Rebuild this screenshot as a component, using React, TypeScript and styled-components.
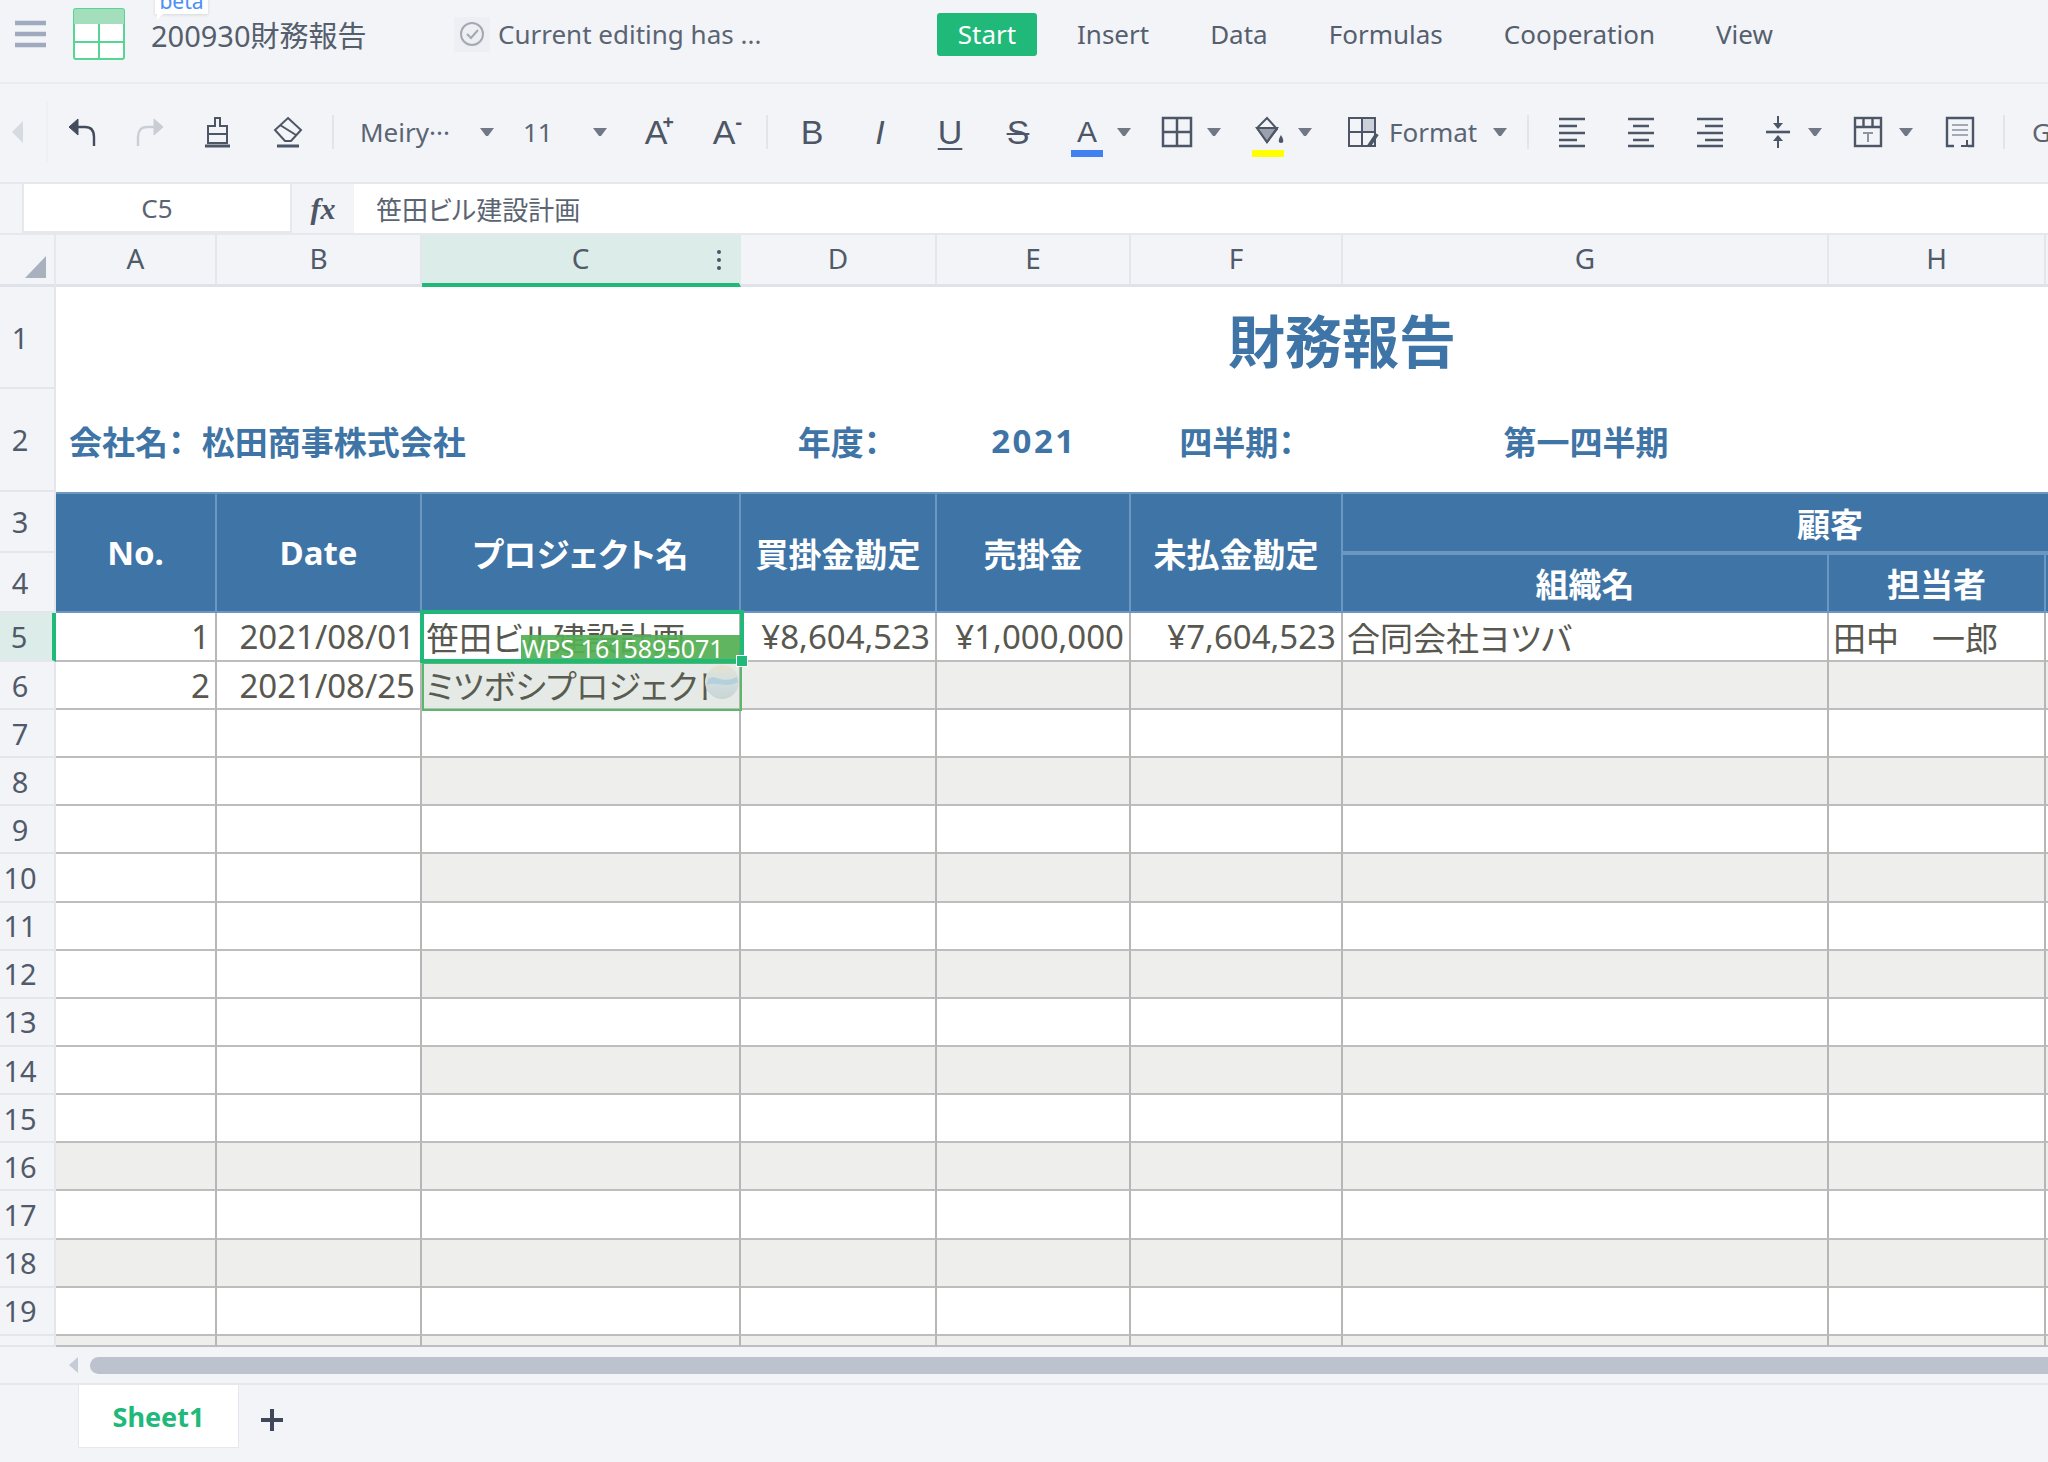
import React from "react";
import styled, { createGlobalStyle } from "styled-components";

const GREEN = "#20b97a";
const BLUE = "#3f74a6";
const ICON = "#4d5666";
const PAGE = "#f2f4f8";
const UI_FONT = `"Noto Sans", "Noto Sans CJK JP", sans-serif`;
const CJK_FONT = `"Noto Sans", "Noto Sans CJK JP", sans-serif`;

const Global = createGlobalStyle`
  html, body { margin: 0; padding: 0; width: 2048px; height: 1462px; overflow: hidden; background: ${PAGE}; }
  body { font-family: ${UI_FONT}; font-feature-settings: "palt"; }
  * { box-sizing: border-box; }
`;

const Page = styled.div`
  width: 2048px;
  height: 1462px;
  display: flex;
  flex-direction: column;
  overflow: hidden;
  position: relative;
`;

/* ---------- title bar ---------- */
const TitleBar = styled.header`
  height: 84px;
  flex: none;
  display: flex;
  align-items: center;
  padding: 0 0 14px 15px;
  border-bottom: 2px solid #e9ebf0;
  position: relative;
`;
const BetaTag = styled.div`
  position: absolute;
  left: 155px;
  top: -8px;
  width: 53px;
  height: 22px;
  background: #fff;
  color: #4a90f5;
  font-size: 21px;
  line-height: 18px;
  text-align: center;
  box-shadow: 0 1px 3px rgba(0, 0, 0, 0.12);
  &::after {
    content: "";
    position: absolute;
    left: 2px;
    bottom: -6px;
    border-left: 6px solid #fff;
    border-bottom: 6px solid transparent;
  }
`;
const DocTitle = styled.div`
  margin-left: 26px;
  width: 226px;
  font-size: 29px;
  color: #555e6c;
  white-space: nowrap;
`;
const StatusBox = styled.div`
  margin-left: 77px;
  width: 36px;
  height: 35px;
  background: #edeff2;
  display: flex;
  align-items: center;
  justify-content: center;
`;
const StatusText = styled.div`
  margin-left: 8px;
  width: 265px;
  font-size: 26px;
  color: #5b6472;
  white-space: nowrap;
`;
const MenuNav = styled.nav`
  margin-left: 174px;
  display: flex;
  align-items: center;
  gap: 61px;
`;
const MenuTab = styled.div<{ $active?: boolean }>`
  height: 43px;
  display: flex;
  align-items: center;
  justify-content: center;
  font-size: 26px;
  white-space: nowrap;
  color: ${(p) => (p.$active ? "#fff" : "#565f6e")};
  ${(p) => p.$active && `width: 100px; margin-right: -21px; background: ${GREEN}; border-radius: 3px;`}
`;

/* ---------- toolbar ---------- */
const ToolBar = styled.div`
  height: 100px;
  flex: none;
  display: flex;
  align-items: center;
  border-bottom: 2px solid #e6e8ee;
  overflow: hidden;
  padding-bottom: 2px;
`;
const NavEdge = styled.div`
  width: 48px;
  height: 60px;
  flex: none;
  display: flex;
  align-items: center;
  padding-left: 12px;
  border-right: 2px solid #eef0f4;
  &::before {
    content: "";
    border-right: 11px solid #d6dae1;
    border-top: 11px solid transparent;
    border-bottom: 11px solid transparent;
  }
`;
const Tool = styled.div<{ $ml: number; $w?: number }>`
  flex: none;
  margin-left: ${(p) => p.$ml}px;
  width: ${(p) => p.$w ?? 32}px;
  height: 38px;
  position: relative;
  display: flex;
  align-items: center;
  justify-content: center;
  color: ${ICON};
`;
const Divider = styled.div<{ $ml: number }>`
  flex: none;
  margin-left: ${(p) => p.$ml}px;
  width: 2px;
  height: 34px;
  background: #e2e4ea;
`;
const Caret = styled.div<{ $ml: number }>`
  flex: none;
  margin-left: ${(p) => p.$ml}px;
  width: 14px;
  height: 8px;
  border-left: 6px solid transparent;
  border-right: 6px solid transparent;
  border-top: 8px solid #717885;
`;
const ToolLabel = styled.div<{ $ml: number; $w: number }>`
  flex: none;
  margin-left: ${(p) => p.$ml}px;
  width: ${(p) => p.$w}px;
  font-size: 26px;
  color: #5b6472;
  white-space: nowrap;
  overflow: hidden;
`;
const Glyph = styled.span<{ $italic?: boolean; $line?: "under" | "strike"; $weight?: number }>`
  font-family: "Liberation Sans", "Noto Sans", sans-serif;
  font-size: 34px;
  line-height: 38px;
  font-weight: ${(p) => p.$weight ?? 400};
  font-style: ${(p) => (p.$italic ? "italic" : "normal")};
  text-decoration: ${(p) => (p.$line === "under" ? "underline" : p.$line === "strike" ? "line-through" : "none")};
  text-decoration-thickness: 2px;
  text-underline-offset: 4px;
`;
const SizeMark = styled.span`
  position: absolute;
  right: -2px;
  top: -1px;
  font-size: 20px;
  line-height: 20px;
  font-weight: 700;
`;
const ColorBar = styled.div<{ $color: string }>`
  position: absolute;
  left: 0;
  right: 0;
  bottom: -6px;
  height: 7px;
  background: ${(p) => p.$color};
`;

/* ---------- formula bar ---------- */
const FormulaBar = styled.div`
  height: 51px;
  flex: none;
  display: flex;
  align-items: stretch;
  padding-left: 22px;
  border-bottom: 2px solid #e6e8ee;
`;
const NameBox = styled.div`
  width: 270px;
  background: #fff;
  border: 2px solid #e6e8ee;
  border-top-width: 0;
  display: flex;
  align-items: center;
  justify-content: center;
  font-size: 26px;
  color: #5b6472;
`;
const FxMark = styled.div`
  width: 62px;
  display: flex;
  align-items: center;
  justify-content: center;
  font-family: "Liberation Serif", serif;
  font-style: italic;
  font-weight: 700;
  font-size: 30px;
  color: #4d5666;
`;
const FormulaInput = styled.div`
  flex: 1;
  background: #fff;
  padding-left: 22px;
  display: flex;
  align-items: center;
  font-size: 26px;
  color: #5b6472;
`;

/* ---------- sheet ---------- */
const Sheet = styled.div`
  position: relative;
  flex: none;
  height: 1112px;
  overflow: hidden;
  display: grid;
  grid-template-columns: 56px 161px 205px 319px 196px 194px 212px 486px 217px 273px 309px;
  grid-template-rows: 52px 102px 103px 61px 60px 49px 48px repeat(13, 48.15px) 11px;
`;
const Corner = styled.div`
  grid-column: 1;
  grid-row: 1;
  border-bottom: 3px solid #dfe2e8;
  border-right: 2px solid #e6e8ee;
  position: relative;
  &::after {
    content: "";
    position: absolute;
    right: 8px;
    bottom: 6px;
    border-left: 21px solid transparent;
    border-bottom: 22px solid #a9b1bf;
  }
`;
const ColHead = styled.div<{ $col: number; $active?: boolean }>`
  grid-column: ${(p) => p.$col};
  grid-row: 1;
  position: relative;
  display: flex;
  align-items: center;
  justify-content: center;
  padding-bottom: 3px;
  font-size: 28px;
  color: #515a69;
  background: ${(p) => (p.$active ? "#dcece9" : PAGE)};
  border-right: 2px solid ${(p) => (p.$active ? "#dcece9" : "#e4e6ec")};
  border-bottom: ${(p) => (p.$active ? `4px solid ${GREEN}` : "3px solid #dfe2e8")};
`;
const ColMenu = styled.div`
  position: absolute;
  right: 18px;
  top: 15px;
  display: flex;
  flex-direction: column;
  gap: 4px;
  span {
    width: 4px;
    height: 4px;
    border-radius: 50%;
    background: #4d5666;
  }
`;
const RowHead = styled.div<{ $row: number; $active?: boolean }>`
  grid-column: 1;
  grid-row: ${(p) => p.$row};
  display: flex;
  align-items: center;
  justify-content: center;
  padding-right: 14px;
  font-size: 29px;
  color: #515a69;
  background: ${(p) => (p.$active ? "#dcece9" : PAGE)};
  border-right: ${(p) => (p.$active ? `4px solid ${GREEN}` : "2px solid #e4e6ec")};
  border-bottom: 2px solid #e4e6ec;
`;
const TitleCell = styled.div`
  grid-column: 2 / -1;
  grid-row: 2;
  background: #fff;
  display: flex;
  align-items: center;
  justify-content: center;
  font-size: 57px;
  font-weight: 700;
  color: ${BLUE};
  font-family: "Noto Sans CJK JP", sans-serif;
`;
const InfoCell = styled.div<{ $col: string; $center?: boolean }>`
  grid-column: ${(p) => p.$col};
  grid-row: 3;
  background: #fff;
  display: flex;
  align-items: center;
  justify-content: ${(p) => (p.$center ? "center" : "flex-start")};
  padding-left: ${(p) => (p.$center ? 0 : 13)}px;
  font-size: 33px;
  font-weight: 700;
  color: ${BLUE};
  white-space: pre;
`;
const WideNumber = styled.span`
  letter-spacing: 2.5px;
`;
const HeadCell = styled.div<{ $col: string; $row: string }>`
  grid-column: ${(p) => p.$col};
  grid-row: ${(p) => p.$row};
  background: ${BLUE};
  display: flex;
  align-items: center;
  justify-content: center;
  font-size: 33px;
  font-weight: 700;
  color: #fff;
  white-space: nowrap;
  border-right: 2px solid #6c97c0;
  border-bottom: 2px solid #6c97c0;
  border-top: 2px solid #6c97c0;
`;
const Cell = styled.div<{ $col: number; $row: number; $shaded: boolean; $right: boolean }>`
  grid-column: ${(p) => p.$col};
  grid-row: ${(p) => p.$row};
  background: ${(p) => (p.$shaded ? "#eeeeec" : "#fff")};
  border-right: 2px solid #b6b6b6;
  border-bottom: 2px solid #bdbdbd;
  display: flex;
  align-items: center;
  justify-content: ${(p) => (p.$right ? "flex-end" : "flex-start")};
  padding: 0 5px 0 4px;
  font-size: 33px;
  color: #585850;
  white-space: nowrap;
  overflow: hidden;
`;
const Selection = styled.div`
  position: absolute;
  left: 420px;
  top: 375px;
  width: 324px;
  height: 53px;
  border: 4px solid ${GREEN};
  pointer-events: none;
`;
const FillHandle = styled.div`
  position: absolute;
  right: -8px;
  bottom: -8px;
  width: 12px;
  height: 12px;
  background: ${GREEN};
  border: 1px solid #fff;
`;
const PeerCell = styled.div`
  position: absolute;
  left: 422px;
  top: 427px;
  width: 320px;
  height: 49px;
  border: 2px solid #5bb76a;
  background: rgba(90, 180, 110, 0.05);
`;
const PeerLabel = styled.div`
  position: absolute;
  left: 521px;
  top: 400px;
  width: 221px;
  height: 27px;
  background: rgba(84, 176, 84, 0.93);
  color: #fff;
  font-size: 25px;
  line-height: 27px;
  padding-left: 1px;
  white-space: nowrap;
  overflow: hidden;
`;
const PeerAvatar = styled.svg`
  position: absolute;
  left: 705px;
  top: 430px;
  width: 34px;
  height: 34px;
`;

/* ---------- bottom ---------- */
const ScrollRow = styled.div`
  height: 38px;
  flex: none;
  display: flex;
  align-items: center;
  padding: 0 0 0 69px;
  border-bottom: 2px solid #e6e8ee;
`;
const ScrollLeft = styled.div`
  width: 0;
  height: 0;
  border-right: 9px solid #c6ccd7;
  border-top: 8px solid transparent;
  border-bottom: 8px solid transparent;
`;
const ScrollThumb = styled.div`
  margin-left: 12px;
  flex: 1;
  height: 17px;
  border-radius: 9px 0 0 9px;
  background: #bcc3ce;
`;
const TabRow = styled.div`
  flex: 1;
  display: flex;
  align-items: flex-start;
  padding-left: 78px;
`;
const SheetTab = styled.div`
  width: 161px;
  height: 63px;
  background: #fff;
  border: 1px solid #e6e8ee;
  border-top: none;
  display: flex;
  align-items: center;
  justify-content: center;
  font-size: 27px;
  font-weight: 700;
  color: ${GREEN};
`;
const AddSheet = styled.svg`
  margin: 23px 0 0 21px;
  width: 24px;
  height: 24px;
`;

/* ---------- icons ---------- */
const Ico = ({ children, w = 32, h = 32 }: { children: React.ReactNode; w?: number; h?: number }) => (
  <svg width={w} height={h} viewBox={`0 0 ${w} ${h}`} fill="none" stroke={ICON} strokeWidth={2}>
    {children}
  </svg>
);

const Undo = ({ color = "#434c5c" }: { color?: string }) => (
  <svg width="32" height="32" viewBox="0 0 32 32" fill="none" stroke={color} strokeWidth="2.4">
    <path d="M12 3 L3 11 L12 19 Z" fill={color} strokeWidth="1" />
    <path d="M9 11 H19 C25 11 28 15 28 21 V30" />
  </svg>
);
const Redo = () => (
  <svg width="32" height="32" viewBox="0 0 32 32" fill="none" stroke="#c9cdd4" strokeWidth="2.4">
    <path d="M20 3 L29 11 L20 19 Z" fill="#c9cdd4" strokeWidth="1" />
    <path d="M23 11 H13 C7 11 4 15 4 21 V30" />
  </svg>
);

export default function App() {
  const letters = ["A", "B", "C", "D", "E", "F", "G", "H", "I", "J"];
  const data: Record<number, string[]> = {
    5: ["1", "2021/08/01", "笹田ビル建設計画", "¥8,604,523", "¥1,000,000", "¥7,604,523", "合同会社ヨツバ", "田中　一郎"],
    6: ["2", "2021/08/25", "ミツボシプロジェクト"],
  };
  const rightCols = [0, 1, 3, 4, 5];
  const bodyRows = Array.from({ length: 16 }, (_, i) => i + 5);

  return (
    <Page>
      <Global />
      <TitleBar>
        <BetaTag>beta</BetaTag>
        <Ico w={31} h={28}>
          <path d="M0 3 H31 M0 14 H31 M0 25 H31" stroke="#a0aabf" strokeWidth="4.5" />
        </Ico>
        <svg style={{ marginLeft: 27 }} width="52" height="52" viewBox="0 0 52 52" fill="none">
          <rect x="1" y="1" width="50" height="50" rx="2" fill="#fff" stroke="#57d593" strokeWidth="2" />
          <path d="M1 3 a2 2 0 0 1 2 -2 H49 a2 2 0 0 1 2 2 V16 H1 Z" fill="#a3dfbd" />
          <path d="M26 16 V51 M1 34 H51" stroke="#57d593" strokeWidth="2" />
        </svg>
        <DocTitle>200930財務報告</DocTitle>
        <StatusBox>
          <svg width="26" height="26" viewBox="0 0 26 26" fill="none" stroke="#a3a9b4" strokeWidth="2">
            <circle cx="13" cy="13" r="11" />
            <path d="M8 13 L12 17 L19 9" />
          </svg>
        </StatusBox>
        <StatusText>Current editing has ...</StatusText>
        <MenuNav>
          <MenuTab $active>Start</MenuTab>
          <MenuTab>Insert</MenuTab>
          <MenuTab>Data</MenuTab>
          <MenuTab>Formulas</MenuTab>
          <MenuTab>Cooperation</MenuTab>
          <MenuTab>View</MenuTab>
        </MenuNav>
      </TitleBar>

      <ToolBar>
        <NavEdge />
        <Tool $ml={18}><Undo /></Tool>
        <Tool $ml={36}><Redo /></Tool>
        <Tool $ml={36}>
          <Ico>
            <path d="M13 2 H18 V10 H25 V27 H6 V10 H13 Z" />
            <path d="M6 18 H25" />
            <path d="M3 30 H28" strokeWidth="3" />
          </Ico>
        </Tool>
        <Tool $ml={38}>
          <Ico>
            <path d="M16 2 L29 14 L19 25 H13 L3 14 Z" />
            <path d="M8 9 L24 19" />
            <path d="M5 30 H27" strokeWidth="3" />
          </Ico>
        </Tool>
        <Divider $ml={28} />
        <ToolLabel $ml={26} $w={92}>Meiry···</ToolLabel>
        <Caret $ml={28} />
        <ToolLabel $ml={29} $w={27}>11</ToolLabel>
        <Caret $ml={43} />
        <Tool $ml={33}><Glyph>A</Glyph><SizeMark>+</SizeMark></Tool>
        <Tool $ml={36}><Glyph>A</Glyph><SizeMark>-</SizeMark></Tool>
        <Divider $ml={26} />
        <Tool $ml={28}><Glyph>B</Glyph></Tool>
        <Tool $ml={36}><Glyph $italic>I</Glyph></Tool>
        <Tool $ml={38}><Glyph $line="under">U</Glyph></Tool>
        <Tool $ml={36}><Glyph $line="strike">S</Glyph></Tool>
        <Tool $ml={37}>
          <Glyph style={{ fontSize: 30 }}>A</Glyph>
          <ColorBar $color="#4080f0" />
        </Tool>
        <Caret $ml={14} />
        <Tool $ml={30}>
          <Ico>
            <rect x="2" y="2" width="28" height="28" strokeWidth="2.5" />
            <path d="M16 2 V30 M2 16 H30" strokeWidth="2.5" />
          </Ico>
        </Tool>
        <Caret $ml={14} />
        <Tool $ml={31}>
          <Ico>
            <path d="M5 12 L15 26 L25 13 L15 2 Z" />
            <path d="M5 12 H25 L15 26 Z" fill="#9aa1ad" stroke={ICON} />
            <path d="M29 19 C26 24 26 27 29 27 C32 27 32 24 29 19 Z" fill={ICON} stroke="none" />
          </Ico>
          <ColorBar $color="#ffff00" />
        </Tool>
        <Caret $ml={14} />
        <Tool $ml={35}>
          <Ico>
            <rect x="2" y="2" width="26" height="28" />
            <rect x="15" y="2" width="13" height="14" fill="#ccd0d8" />
            <path d="M15 2 V30 M2 16 H28" />
            <path d="M22 30 L30 18" strokeWidth="4" stroke={ICON} />
          </Ico>
        </Tool>
        <ToolLabel $ml={10} $w={88}>Format</ToolLabel>
        <Caret $ml={16} />
        <Divider $ml={20} />
        <Tool $ml={27}>
          <Ico><path d="M3 3 H29 M3 10 H21 M3 17 H29 M3 24 H21 M3 30 H29" strokeWidth="2.6" /></Ico>
        </Tool>
        <Tool $ml={37}>
          <Ico><path d="M3 3 H29 M8 10 H24 M3 17 H29 M8 24 H24 M3 30 H29" strokeWidth="2.6" /></Ico>
        </Tool>
        <Tool $ml={37}>
          <Ico><path d="M3 3 H29 M11 10 H29 M3 17 H29 M11 24 H29 M3 30 H29" strokeWidth="2.6" /></Ico>
        </Tool>
        <Tool $ml={36}>
          <Ico>
            <path d="M4 16 H28" strokeWidth="2.6" />
            <path d="M16 0 V8" />
            <path d="M11 7 H21 L16 13 Z" fill={ICON} stroke="none" />
            <path d="M16 24 V32" />
            <path d="M11 25 H21 L16 19 Z" fill={ICON} stroke="none" />
          </Ico>
        </Tool>
        <Caret $ml={14} />
        <Tool $ml={30}>
          <Ico>
            <rect x="3" y="2" width="26" height="28" strokeWidth="2.4" />
            <path d="M3 11 H29 M11.5 2 V11 M20.5 2 V11" strokeWidth="2.4" />
            <path d="M11 17 H21 M16 17 V26" stroke="#8e95a2" />
          </Ico>
        </Tool>
        <Caret $ml={15} />
        <Tool $ml={31}>
          <Ico>
            <path d="M10 30 H3 V2 H29 V30 H24" strokeWidth="2.4" />
            <path d="M8 9 H24 M8 14 H24 M8 19 H24" stroke="#a4aab5" />
            <path d="M23 24 V30 H17" />
          </Ico>
        </Tool>
        <Divider $ml={27} />
        <ToolLabel $ml={27} $w={30}>Group</ToolLabel>
      </ToolBar>

      <FormulaBar>
        <NameBox>C5</NameBox>
        <FxMark>fx</FxMark>
        <FormulaInput>笹田ビル建設計画</FormulaInput>
      </FormulaBar>

      <Sheet>
        <Corner />
        {letters.map((l, i) => (
          <ColHead key={l} $col={i + 2} $active={l === "C"}>
            {l}
            {l === "C" && (
              <ColMenu>
                <span />
                <span />
                <span />
              </ColMenu>
            )}
          </ColHead>
        ))}
        {Array.from({ length: 20 }, (_, i) => i + 1).map((n) => (
          <RowHead key={n} $row={n + 1} $active={n === 5}>
            {n < 20 ? n : ""}
          </RowHead>
        ))}

        <TitleCell>財務報告</TitleCell>
        <InfoCell $col="2 / 5">{"会社名：  松田商事株式会社"}</InfoCell>
        <InfoCell $col="5" $center>年度：</InfoCell>
        <InfoCell $col="6" $center><WideNumber>2021</WideNumber></InfoCell>
        <InfoCell $col="7" $center>四半期：</InfoCell>
        <InfoCell $col="8" $center>第一四半期</InfoCell>
        <InfoCell $col="9 / -1" />

        <HeadCell $col="2" $row="4 / 6">No.</HeadCell>
        <HeadCell $col="3" $row="4 / 6">Date</HeadCell>
        <HeadCell $col="4" $row="4 / 6">プロジェクト名</HeadCell>
        <HeadCell $col="5" $row="4 / 6">買掛金勘定</HeadCell>
        <HeadCell $col="6" $row="4 / 6">売掛金</HeadCell>
        <HeadCell $col="7" $row="4 / 6">未払金勘定</HeadCell>
        <HeadCell $col="8 / 11" $row="4">顧客</HeadCell>
        <HeadCell $col="8" $row="5">組織名</HeadCell>
        <HeadCell $col="9" $row="5">担当者</HeadCell>
        <HeadCell $col="10 / 12" $row="5" />
        <HeadCell $col="11" $row="4" />

        {bodyRows.map((r) =>
          letters.slice(0, 9).map((l, c) => {
            const even = r % 2 === 0;
            const shaded = even && (c >= 2 || r >= 16);
            return (
              <Cell key={l + r} $col={c + 2} $row={r + 1} $shaded={shaded} $right={rightCols.includes(c)}>
                {data[r]?.[c]}
              </Cell>
            );
          })
        )}

        <PeerCell />
        <PeerAvatar viewBox="0 0 34 34">
          <defs>
            <linearGradient id="peerSky" x1="0" y1="0" x2="0" y2="1">
              <stop offset="0" stopColor="#e6e2cf" />
              <stop offset="0.45" stopColor="#d3e0df" />
              <stop offset="1" stopColor="#c9d4d4" />
            </linearGradient>
          </defs>
          <circle cx="17" cy="17" r="17" fill="url(#peerSky)" />
          <path d="M3 14 C10 8 16 20 32 12 L33 17 C22 24 10 16 2 20 Z" fill="#b4d0dd" />
        </PeerAvatar>
        <PeerLabel>WPS 1615895071</PeerLabel>
        <Selection>
          <FillHandle />
        </Selection>
      </Sheet>

      <ScrollRow>
        <ScrollLeft />
        <ScrollThumb />
      </ScrollRow>
      <TabRow>
        <SheetTab>Sheet1</SheetTab>
        <AddSheet viewBox="0 0 24 24">
          <path d="M12 1 V23 M1 12 H23" stroke="#3f4859" strokeWidth="4" />
        </AddSheet>
      </TabRow>
    </Page>
  );
}
